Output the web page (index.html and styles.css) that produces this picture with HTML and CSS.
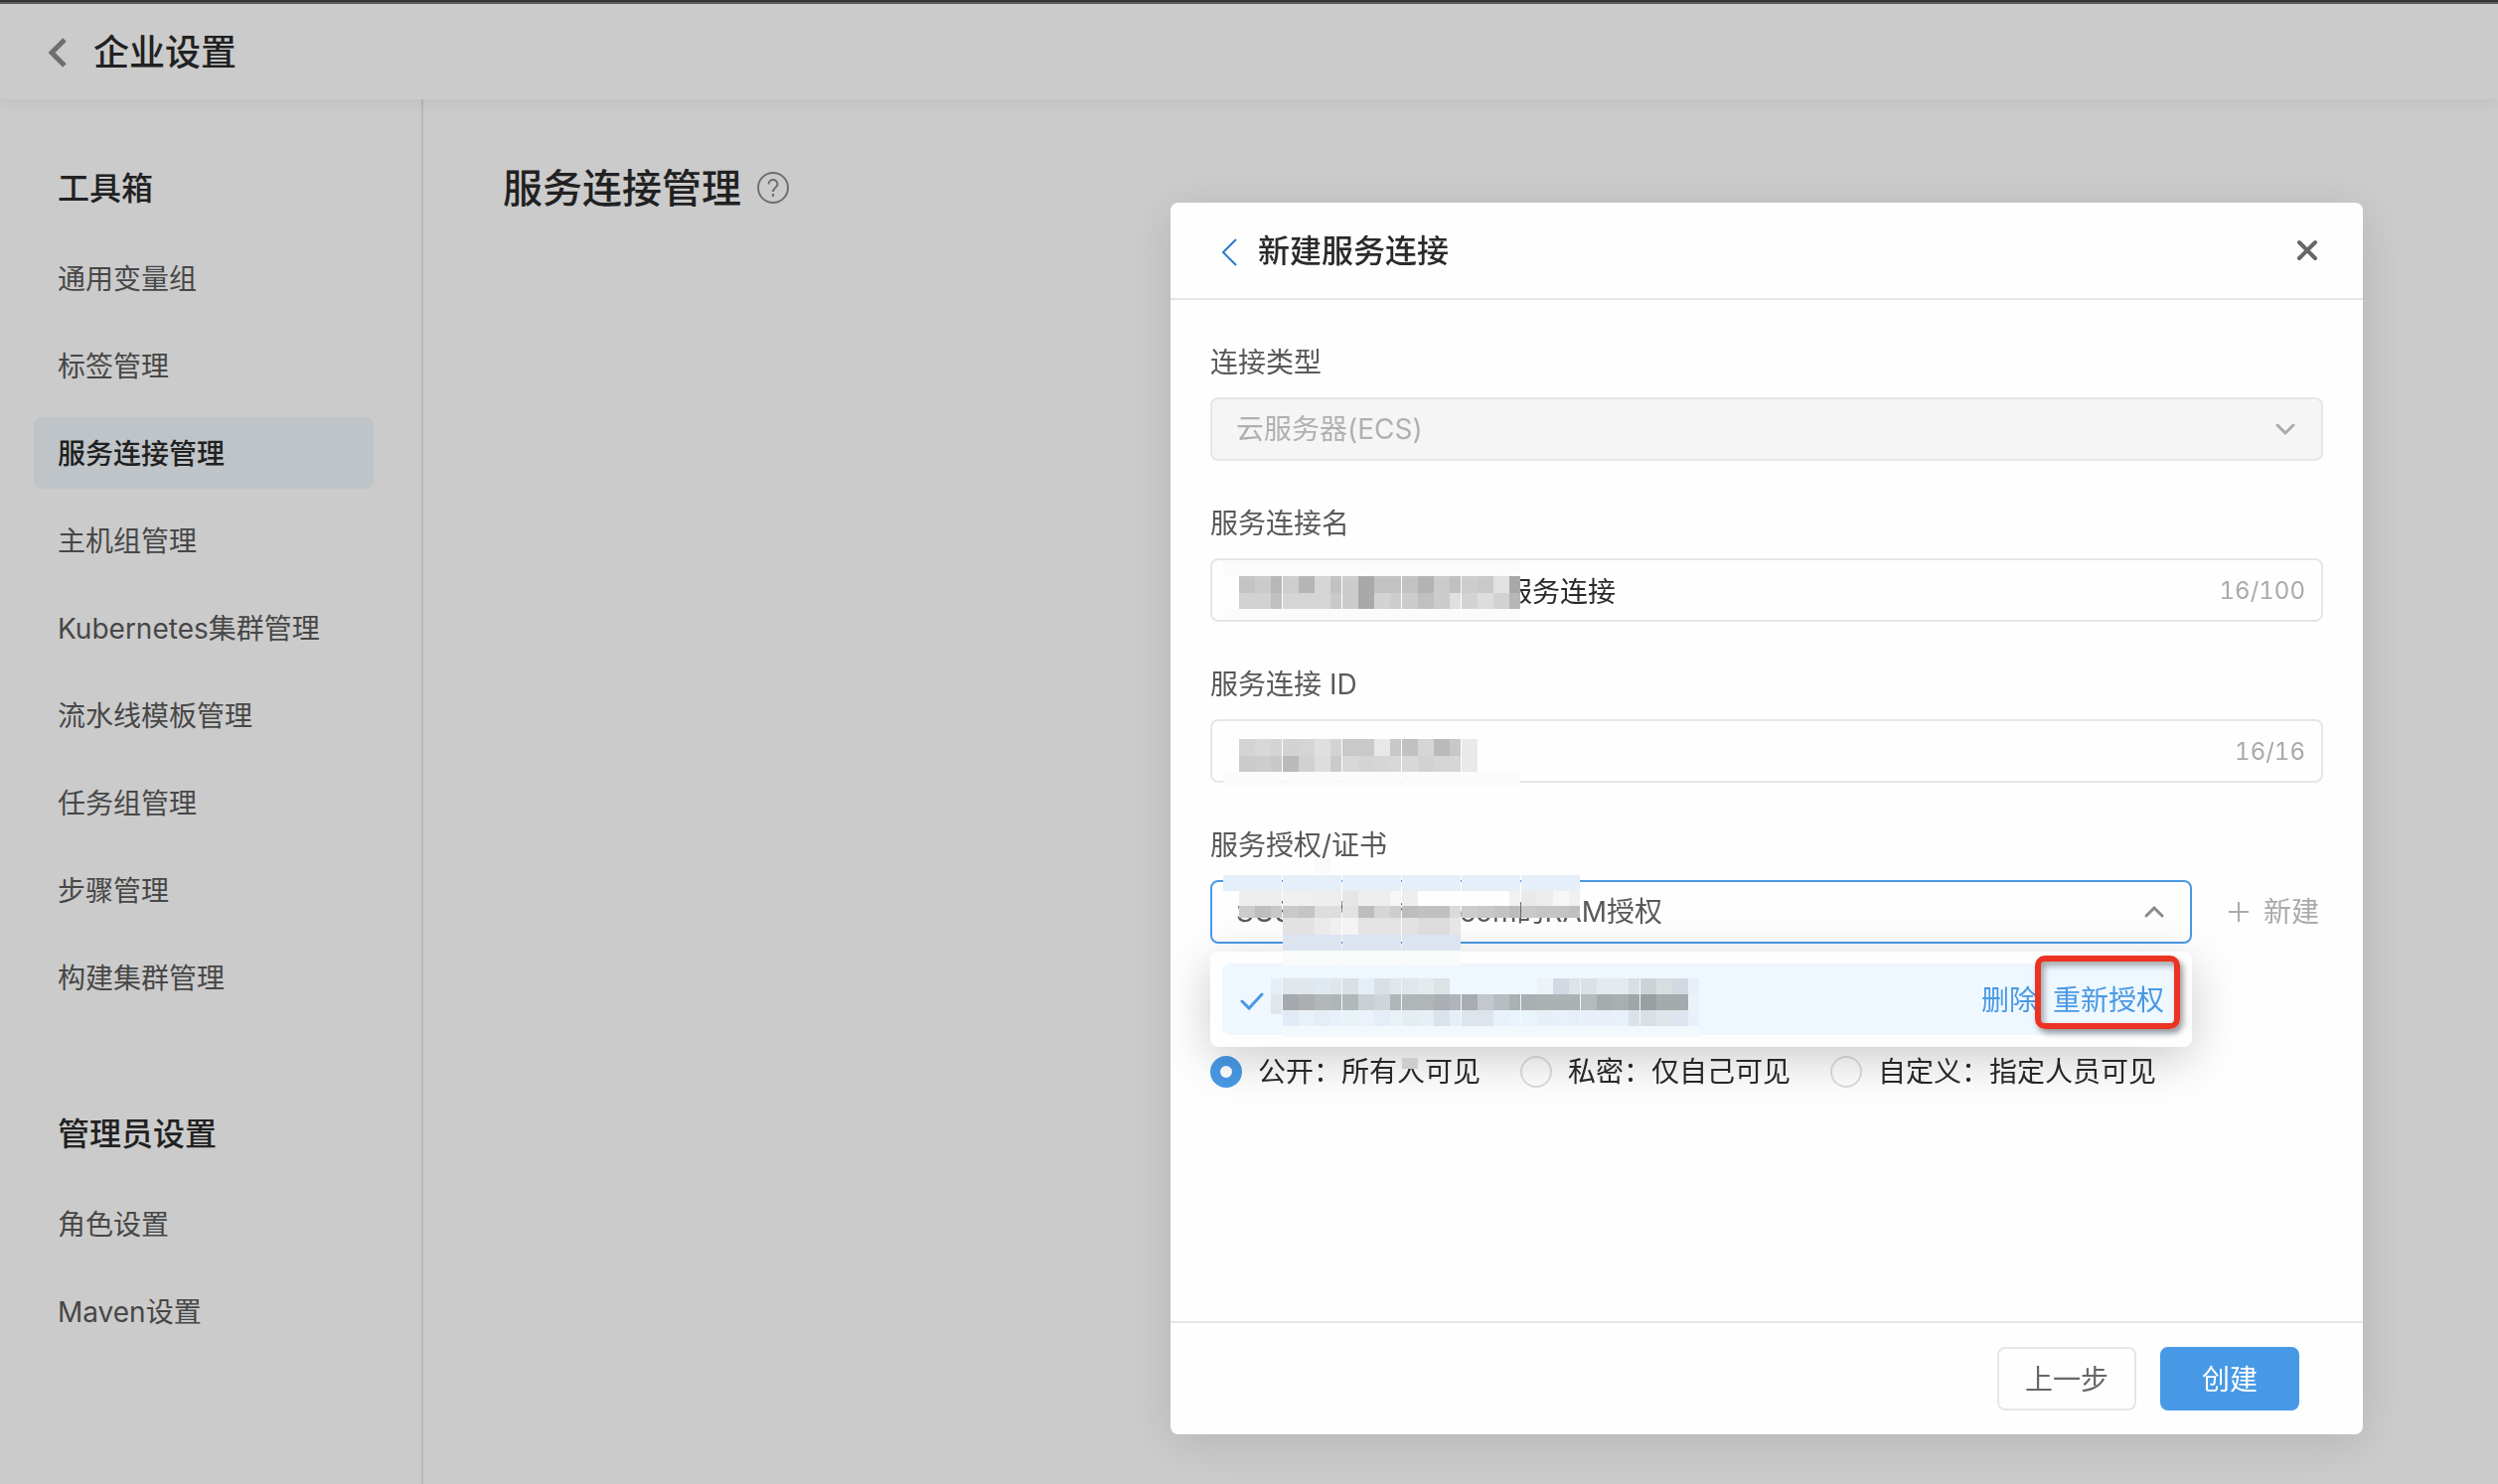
FILE: index.html
```html
<!DOCTYPE html>
<html lang="zh-CN">
<head>
<meta charset="utf-8">
<title>企业设置</title>
<link rel="stylesheet" href="styles.css">
</head>
<body>
<div class="page">
  <header class="topbar">
    <a class="topbar-back" href="#" aria-label="返回"><svg width="20" height="32" viewBox="0 0 20 32"><path d="M17 3 4 16l13 13" fill="none" stroke="currentColor" stroke-width="5"/></svg></a>
    <h1 class="topbar-title">企业设置</h1>
  </header>
  <div class="columns">
    <nav class="sidebar">
      <section class="group">
        <h2 class="group-title">工具箱</h2>
        <a class="nav-item" href="#">通用变量组</a>
        <a class="nav-item" href="#">标签管理</a>
        <a class="nav-item nav-item-active" href="#">服务连接管理</a>
        <a class="nav-item" href="#">主机组管理</a>
        <a class="nav-item" href="#">Kubernetes集群管理</a>
        <a class="nav-item" href="#">流水线模板管理</a>
        <a class="nav-item" href="#">任务组管理</a>
        <a class="nav-item" href="#">步骤管理</a>
        <a class="nav-item" href="#">构建集群管理</a>
      </section>
      <section class="group">
        <h2 class="group-title">管理员设置</h2>
        <a class="nav-item" href="#">角色设置</a>
        <a class="nav-item" href="#">Maven设置</a>
      </section>
    </nav>
    <main class="content">
      <h2 class="content-title">服务连接管理</h2>
      <svg class="help" width="32" height="32" viewBox="0 0 32 32" fill="none" stroke="currentColor" stroke-width="2"><circle cx="16" cy="16" r="15"/><path d="M11.500 12.500c0-6 9-6 9 0 0 3-4.500 3.500-4.500 7.500"/><path d="M16 22v3"/></svg>
    </main>
  </div>
</div>

<div class="overlay">
  <form class="modal" role="dialog" aria-labelledby="modal-title">
    <header class="modal-head">
      <button class="icon-button back" type="button" aria-label="返回"><svg width="18" height="30" viewBox="0 0 18 30"><path d="M16 2 3 15l13 13" fill="none" stroke="currentColor" stroke-width="2"/></svg></button>
      <h2 class="modal-title" id="modal-title">新建服务连接</h2>
      <button class="icon-button close" type="button" aria-label="关闭"><svg width="24" height="24" viewBox="0 0 24 24"><path d="m4 4 16 16M20 4 4 20" fill="none" stroke="currentColor" stroke-width="4" stroke-linecap="round"/></svg></button>
    </header>

    <div class="modal-body">
      <div class="field">
        <label class="label" for="type">连接类型</label>
        <div class="control">
          <select class="box select" id="type" disabled><option>云服务器(ECS)</option></select>
          <svg class="arrow" width="24" height="16" viewBox="0 0 24 16"><path d="m4 4 8 8 8-8" fill="none" stroke="currentColor" stroke-width="3" stroke-linecap="round"/></svg>
        </div>
      </div>

      <div class="field">
        <label class="label" for="name">服务连接名</label>
        <div class="control">
          <input class="box box-masked" id="name" type="text" value="服务连接">
          <span class="counter">16/100</span>
          <svg class="mosaic mosaic-name" id="mosaic-name" width="300" height="60"></svg>
        </div>
      </div>

      <div class="field">
        <label class="label" for="conn-id">服务连接 ID</label>
        <div class="control">
          <input class="box" id="conn-id" type="text">
          <span class="counter">16/16</span>
          <svg class="mosaic mosaic-id" id="mosaic-id" width="300" height="48"></svg>
        </div>
      </div>

      <div class="field">
        <label class="label" for="auth">服务授权/证书</label>
        <div class="auth-row">
          <div class="control control-open">
            <select class="box select select-open" id="auth"><option>SUS************com的RAM授权</option></select>
            <svg class="arrow" width="24" height="16" viewBox="0 0 24 16"><path d="m4 12 8-8 8 8" fill="none" stroke="currentColor" stroke-width="3" stroke-linecap="round"/></svg>
            <div class="dropdown">
              <div class="option">
                <svg class="check" width="26" height="22" viewBox="0 0 26 22"><path d="m4 12 7 7L24 5" fill="none" stroke="currentColor" stroke-width="3" stroke-linecap="round"/></svg>
                <a class="option-link" href="#">删除</a>
                <a class="option-link" href="#">重新授权</a>
              </div>
              <div class="highlight"></div>
            </div>
            <svg class="mosaic mosaic-auth" id="mosaic-auth" width="480" height="180"></svg>
          </div>
          <button class="add" type="button"><svg width="22" height="22" viewBox="0 0 22 22"><path d="M11 1v20M1 11h20" stroke="currentColor" stroke-width="2"/></svg>新建</button>
        </div>
      </div>

      <div class="radios">
        <label class="choice"><input class="radio" type="radio" name="scope" checked><span>公开：所有人可见</span><svg class="mosaic mosaic-scope" width="16" height="11"><rect width="16" height="11" fill="#cdcdcd"/></svg></label>
        <label class="choice"><input class="radio" type="radio" name="scope"><span>私密：仅自己可见</span></label>
        <label class="choice"><input class="radio" type="radio" name="scope"><span>自定义：指定人员可见</span></label>
      </div>
    </div>

    <footer class="modal-foot">
      <button class="button" type="button">上一步</button>
      <button class="button button-primary" type="submit">创建</button>
    </footer>
  </form>
</div>
<script src="mosaic.js"></script>
</body>
</html>
```
FILE: styles.css
```css
* { box-sizing: border-box; }

body {
  margin: 0;
  background: #fefefe;
  color: #2a2a2a;
  font: 28px/42px Inter, "Noto Sans CJK SC", sans-serif;
}

h1, h2 { margin: 0; font-weight: 500; }
a { color: inherit; text-decoration: none; }
button, input, select { font: inherit; color: inherit; margin: 0; }
button { cursor: pointer; }
svg { display: block; flex: none; }

.page {
  display: flex;
  flex-direction: column;
  min-height: 100vh;
}

.topbar {
  position: relative;
  z-index: 1;
  display: flex;
  align-items: center;
  gap: 26px;
  height: 100px;
  padding: 4px 48px 0;
  border-top: 2px solid #414248;
  background: #fefefe;
  box-shadow: inset 0 2px #6d7273, 0 4px 16px rgba(0, 0, 0, .06);
}
.topbar-back { color: #8a8a8a; }
.topbar-title { font-size: 36px; line-height: 48px; }

.columns { display: flex; flex: 1; }

.sidebar {
  display: flex;
  flex-direction: column;
  gap: 96px;
  width: 426px;
  padding: 64px 48px 96px 34px;
  border-right: 2px solid #e6e6e6;
}
.group { display: flex; flex-direction: column; gap: 16px; }
.group-title {
  padding: 2px 24px 14px;
  font-size: 32px;
  line-height: 48px;
}
.nav-item {
  padding: 16px 24px 14px;
  border-radius: 8px;
  color: #595959;
}
.nav-item-active {
  background: #eff5fa;
  color: #2a2a2a;
  font-weight: 500;
}

.content {
  display: flex;
  flex: 1;
  align-items: center;
  align-self: flex-start;
  gap: 16px;
  padding: 64px 80px;
}
.content-title { padding-top: 2px; font-size: 40px; line-height: 48px; }
.help { color: #8a8a8a; }

.overlay {
  position: fixed;
  z-index: 10;
  inset: 0;
  display: flex;
  justify-content: flex-end;
  padding: 204px 136px 50px;
  background: rgba(0, 0, 0, .2);
}
.modal {
  display: flex;
  flex-direction: column;
  width: 1200px;
  border-radius: 8px;
  background: #fefefe;
  box-shadow: 0 8px 48px rgba(0, 0, 0, .12);
}

.modal-head {
  display: flex;
  align-items: center;
  gap: 20px;
  padding: 24px 44px 24px 50px;
  border-bottom: 2px solid #e6e6e6;
}
.modal-title { flex: 1; padding-top: 2px; font-size: 32px; line-height: 46px; }
.icon-button { padding: 0; border: 0; background: none; }
.back { padding-top: 4px; color: #2b7bd0; }
.close { color: #666; }

.modal-body {
  display: flex;
  flex: 1;
  flex-direction: column;
  gap: 40px;
  padding: 40px;
}
.field { display: flex; flex-direction: column; gap: 14px; }
.label { padding-top: 2px; color: #595959; }
.control { position: relative; }
.control-open { flex: 1; }

.box {
  display: block;
  width: 100%;
  height: 64px;
  padding: 0 24px;
  border: 2px solid #e6e6e6;
  border-radius: 8px;
  outline: 0;
  background: #fefefe;
}
.box-masked { padding-left: 294px; }
.select { appearance: none; color: #595959; }
.select:disabled { background: #f5f5f5; color: #b0b0b0; opacity: 1; }
.select-open { border-color: #4899e5; }

.arrow {
  position: absolute;
  top: 24px;
  right: 26px;
  color: #aaa;
  pointer-events: none;
}
.control-open .arrow { color: #8a8a8a; }
.counter {
  position: absolute;
  top: 12px;
  right: 18px;
  color: #aaa;
  font-size: 24px;
  font-variant-numeric: tabular-nums;
}

.auth-row { display: flex; align-items: center; gap: 36px; }
.add {
  display: flex;
  align-items: center;
  gap: 14px;
  padding: 0 4px 0 0;
  border: 0;
  background: none;
  color: #aaa;
}

.dropdown {
  position: absolute;
  z-index: 2;
  top: 72px;
  right: 0;
  left: 0;
  padding: 12px;
  border-radius: 8px;
  background: #fefefe;
  box-shadow: 0 12px 48px rgba(0, 0, 0, .2);
}
.option {
  display: flex;
  align-items: center;
  gap: 16px;
  padding: 16px 16px 14px;
  border-radius: 8px;
  background: #eff7ff;
  color: #4899e5;
}
.check { margin-right: auto; }
.highlight {
  position: absolute;
  top: 4px;
  right: 12px;
  width: 146px;
  height: 74px;
  border: 6px solid #eb3323;
  border-radius: 10px;
  box-shadow: 3px 4px 6px rgba(0, 0, 0, .4), inset 3px 4px 6px rgba(0, 0, 0, .35);
  pointer-events: none;
}

.mosaic { position: absolute; z-index: 3; pointer-events: none; }
.mosaic-name { top: 2px; left: 12px; }
.mosaic-id { top: 20px; left: 12px; }
.mosaic-auth { top: -22px; left: 12px; }
.mosaic-scope { top: 7px; left: 193px; }

.radios { display: flex; gap: 40px; padding-top: 68px; }
.choice { position: relative; display: flex; align-items: center; gap: 16px; }
.radio {
  appearance: none;
  width: 32px;
  height: 32px;
  border: 2px solid #ddd;
  border-radius: 50%;
}
.radio:checked { border: 10px solid #4899e5; background: #fff; }

.modal-foot {
  display: flex;
  justify-content: flex-end;
  gap: 24px;
  padding: 24px 64px;
  border-top: 2px solid #e6e6e6;
}
.button {
  width: 140px;
  height: 64px;
  padding: 2px 0 0;
  border: 2px solid #e6e6e6;
  border-radius: 8px;
  background: #fefefe;
  color: #666;
}
.button-primary { border-color: #4899e5; background: #4899e5; color: #fff; }
```
FILE: mosaic.js
```js
// Redaction mosaics: tiles are 60px wide, each with four cells and a 1px seam.
// A row is [top, height, first tile, colours]; "-" leaves a cell clear.
const CELL_X = [1, 17, 33, 49];
const CELL_W = [16, 16, 16, 11];

function drawMosaic(id, rows) {
  const svg = document.getElementById(id);
  for (const [top, height, firstTile, colours] of rows) {
    colours.split(" ").forEach((colour, i) => {
      if (colour === "-") return;
      const hex = colour.length === 2 ? colour.repeat(3) : colour;
      const rect = document.createElementNS("http://www.w3.org/2000/svg", "rect");
      rect.setAttribute("x", (firstTile + Math.floor(i / 4)) * 60 + CELL_X[i % 4]);
      rect.setAttribute("y", top);
      rect.setAttribute("width", CELL_W[i % 4]);
      rect.setAttribute("height", height);
      rect.setAttribute("fill", "#" + hex);
      svg.append(rect);
    });
  }
}

const fill = (colour, count) => Array(count).fill(colour).join(" ");

drawMosaic("mosaic-name", [
  [0, 16, 0, fill("fb", 20)],
  [16, 17, 0, "- c4 cb b8 ce b5 d6 c2 cc a9 c2 c2 c2 b3 cb c0 cd c9 e1 a8"],
  [33, 16, 0, "- d2 d2 c0 d5 d5 d5 c9 cc a9 d3 cd cc c0 cc e0 d3 dd d2 b6"],
  [49, 11, 0, fill("fb", 20)]
]);

drawMosaic("mosaic-id", [
  [0, 17, 0, "- d4 d8 d4 d3 d5 df d3 c9 c9 e8 c8 c1 d6 ba c8 e9"],
  [17, 16, 0, "- cb cd c8 ba d1 dd ca d8 d4 d6 d8 d8 d2 d5 d6 e9"],
  [33, 15, 0, fill("fb", 20)]
]);

drawMosaic("mosaic-auth", [
  [0, 16, 1, "- - fa"],
  [17, 16, 0, fill("e5effa", 24)],
  [33, 15, 0, "fe ee ee ee f0 ef ee ee e6 ee ee f6 ee fe fe fe fe fe fe f1 e9 ec f6 f0"],
  [48, 12, 0, "- cc be c8 c9 c4 dd dd e2 bd d6 cd bd c1 c1 da cd c8 c3 bc c9 c5 c4 c0"],
  [60, 17, 1, "e2 e2 ea f0 f3 e3 e3 e3 e2 dc dc e6"],
  [77, 16, 1, fill("dce4f0", 12)],
  [93, 16, 1, fill("f8fbfa", 12)],
  [121, 16, 0, "- - - e6eef5 dfe7ea dfe7ea e0e9ef dfe6ea d9e1e5 e5edf6 d9dfe3 e0e7ec dfe7eb e3ebee dbe3e4 - - - - - - ebf3f9 d3d9e2 dde4ea dae2e6 e3ebef e3ebef d9dfe6 ccd3d6 d7dfe1 d3d9e1 e8eff6"],
  [137, 20, 0, "- - - dfe6ec"],
  [137, 16, 1, "a6aaae abafb2 b2b7b9 b0b5b8 b2b8ba c9cfd3 cfd5d8 b0b5b8 b0b6b8 b0b6b8 abafb4 b0b5b9 a8acb0 c2c8cb b7bdc0 abb0b3 a9aeb1 acb1b4 acb1b4 acb1b4 b5bbbd a6abad a9aeb1 a0a5a8 999ea0 a5aaad a5aaad ebf3f9"],
  [153, 16, 1, "e2ebf5 e8f0f8 e5eef5 e8f0fb e8f3f8 ebf2fb e5eef6 e8f1f7 e4eef0 e6eff5 dae2ea e6eef7 dce4ec dde4ec e8f0f9 e9f3fc eaf4fb e6eff5 e8f0f9 e6eff8 e8eff8 e8eff8 e8f0f9 dbe2ea d8e0e3 dee5eb dfe5f0 e8f0fa"],
  [169, 11, 1, fill("f3f8fd", 28)]
]);
```
